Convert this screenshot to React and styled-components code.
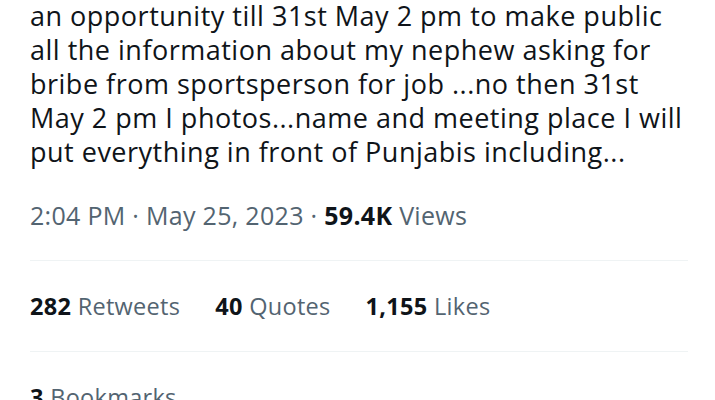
import React from 'react';
import styled, { createGlobalStyle } from 'styled-components';

const GlobalStyle = createGlobalStyle`
  body {
    margin: 0;
    background: #ffffff;
    font-family: "Open Sans", "Noto Sans", sans-serif;
    -webkit-font-smoothing: antialiased;
  }
`;

const Page = styled.div`
  width: 658px;
  padding-left: 30px;
  overflow: hidden;
  height: 400px;
`;

const TweetText = styled.p`
  margin: -1px 0 0;
  font-size: 27px;
  line-height: 34px;
  letter-spacing: 0.5px;
  color: #0f1419;
  white-space: nowrap;
`;

const Meta = styled.div`
  margin-top: 31px;
  padding-bottom: 30px;
  font-size: 25px;
  line-height: 30px;
  letter-spacing: 0.3px;
  color: #536471;
  border-bottom: 1px solid #eff3f4;
`;

const Strong = styled.span`
  font-weight: 700;
  color: #0f1419;
`;

const StatsRow = styled.div`
  display: flex;
  gap: 35px;
  padding: 30px 0;
  font-size: 23.5px;
  line-height: 30px;
  letter-spacing: 0.3px;
  color: #536471;
  border-bottom: 1px solid #eff3f4;
`;

const Stat = styled.span``;

const BookmarkRow = styled.div`
  padding-top: 30px;
  font-size: 23.5px;
  line-height: 30px;
  letter-spacing: 0.3px;
  color: #536471;
`;

const lines = [
  'an opportunity till 31st May 2 pm to make public',
  'all the information about my nephew asking for',
  'bribe from sportsperson for job ...no then 31st',
  'May 2 pm I photos...name and meeting place I will',
  'put everything in front of Punjabis including...',
];

const stats = [
  { count: '282', label: 'Retweets' },
  { count: '40', label: 'Quotes' },
  { count: '1,155', label: 'Likes' },
];

const App = () => {
  return (
    <Page>
      <GlobalStyle />
      <TweetText>
        {lines.map((line, i) => (
          <React.Fragment key={i}>
            {line}
            {i < lines.length - 1 && <br />}
          </React.Fragment>
        ))}
      </TweetText>
      <Meta>
        2:04 PM · May 25, 2023 · <Strong>59.4K</Strong> Views
      </Meta>
      <StatsRow>
        {stats.map((s) => (
          <Stat key={s.label}>
            <Strong>{s.count}</Strong> {s.label}
          </Stat>
        ))}
      </StatsRow>
      <BookmarkRow>
        <Strong>3</Strong> Bookmarks
      </BookmarkRow>
    </Page>
  );
};

export default App;
